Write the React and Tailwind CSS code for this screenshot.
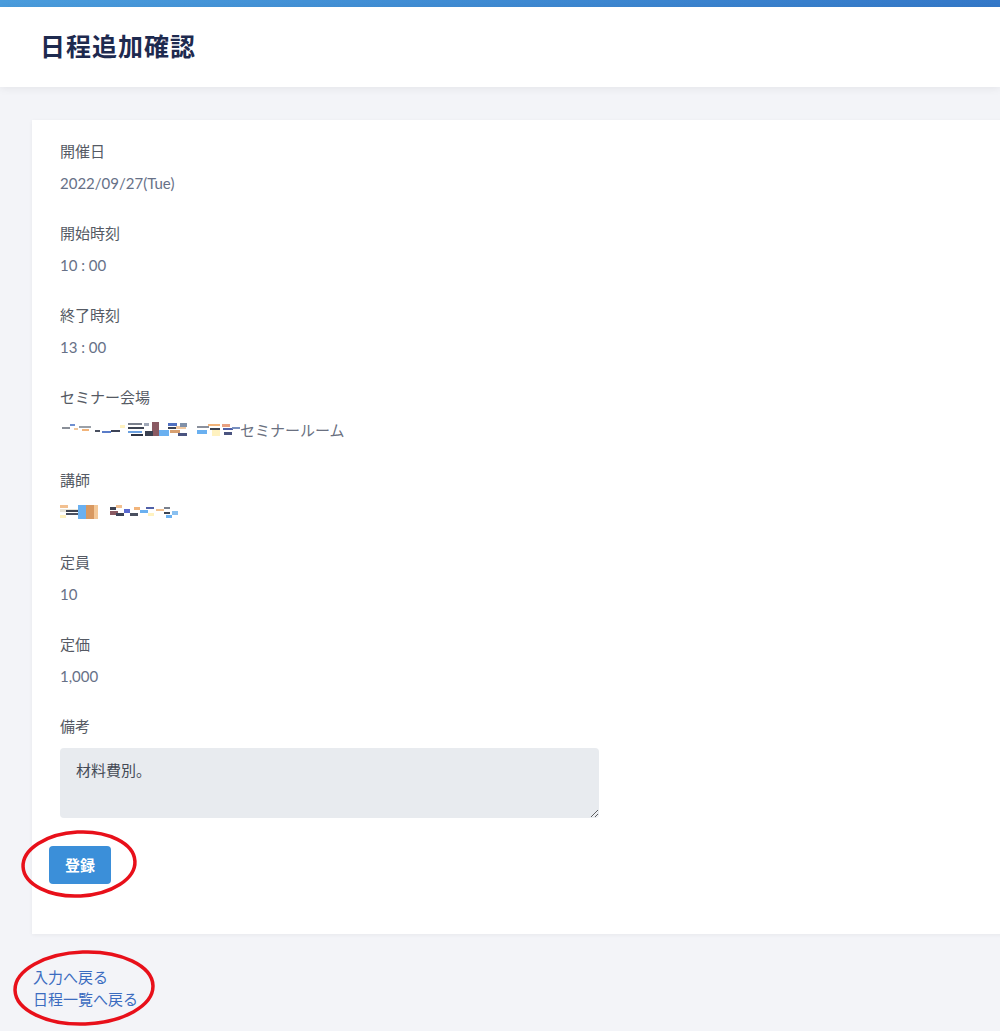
import React from "react";

const venueBlocks = [
  [2, 6, 8, 2, "#8a8f98"], [10, 3, 5, 2, "#6f8fd0"], [14, 7, 4, 2, "#f0c9a0"],
  [19, 5, 12, 2, "#9aa0a8"], [22, 8, 7, 2, "#f2b47a"], [35, 9, 5, 2, "#4a5060"],
  [42, 10, 9, 2, "#5a7cc8"], [51, 9, 9, 2, "#3c4256"], [60, 4, 5, 3, "#fff2c0"],
  [68, 2, 14, 2, "#7a808c"], [68, 6, 16, 2, "#3e4452"], [68, 10, 14, 2, "#6aa0e0"],
  [71, 13, 12, 2, "#2e3444"], [84, 2, 5, 3, "#a0a8b8"],
  [92, 1, 7, 14, "#8a5a62"], [85, 10, 8, 5, "#3a4050"], [99, 9, 10, 6, "#6ab0f0"],
  [108, 2, 9, 3, "#5070c0"], [108, 6, 12, 2, "#3c4252"], [110, 9, 10, 3, "#d8a070"],
  [116, 5, 10, 3, "#f0c8a0"], [120, 2, 7, 4, "#8090a8"], [118, 12, 9, 3, "#4a5480"],
  [137, 5, 12, 2, "#8a909c"], [137, 9, 10, 4, "#6ab0f0"], [148, 3, 12, 2, "#f2b47a"],
  [150, 7, 10, 2, "#3c4252"], [152, 9, 8, 6, "#fff2c0"], [162, 3, 8, 3, "#e8a080"],
  [163, 7, 10, 2, "#5060a8"], [164, 11, 8, 3, "#4a5480"], [172, 6, 8, 2, "#7890c0"],
];

const teacherBlocks = [
  [0, 2, 8, 3, "#f2c090"], [0, 6, 20, 3, "#e8e4d8"], [6, 7, 12, 2, "#3e4452"],
  [6, 10, 12, 2, "#4a5060"], [0, 12, 6, 3, "#fff2c0"], [18, 2, 8, 14, "#6ab0f0"],
  [26, 2, 8, 14, "#d89860"], [34, 2, 4, 14, "#f4c898"],
  [50, 4, 6, 3, "#3c4252"], [50, 8, 8, 4, "#8a5a62"], [56, 2, 6, 3, "#f2c090"],
  [56, 10, 8, 3, "#3c4256"], [64, 6, 6, 4, "#5a6ad0"], [70, 10, 8, 3, "#4a5060"],
  [74, 4, 6, 3, "#f2b47a"], [80, 7, 8, 3, "#6ab0f0"], [86, 4, 8, 2, "#5060a8"],
  [88, 10, 6, 3, "#fff2c0"], [96, 6, 8, 2, "#f0c090"], [104, 4, 6, 2, "#7a808c"],
  [104, 9, 6, 2, "#3e4452"], [106, 12, 6, 3, "#6ab0f0"], [112, 8, 6, 4, "#8ac0f0"],
];

function Mosaic({ blocks, width }) {
  return (
    <svg width={width} height="18" viewBox={`0 0 ${width} 18`} className="block">
      {blocks.map(([x, y, w, h, c], i) => (
        <rect key={i} x={x} y={y} width={w} height={h} fill={c} />
      ))}
    </svg>
  );
}

function Field({ label, children, last }) {
  return (
    <div className={last ? "" : "mb-[26px]"}>
      <div className="text-[15px] leading-6 text-[#555a64]">{label}</div>
      <div className="mt-2 min-h-6 text-[15px] leading-6 text-[#677187]">{children}</div>
    </div>
  );
}

export default function App() {
  return (
    <div
      className="relative min-h-[1031px] w-full overflow-hidden bg-[#f3f4f8]"
      style={{ fontFamily: '"Lato", "Noto Sans CJK JP", sans-serif' }}
    >
      <div className="h-[7px] bg-gradient-to-r from-[#4a9cdc] to-[#3478c8]" />
      <header className="flex h-[80px] items-center bg-white pl-10 shadow-[0_2px_8px_rgba(0,0,0,0.06)]">
        <h1 className="text-[25px] font-bold tracking-[1px] text-[#1e2a4f]">日程追加確認</h1>
      </header>

      <div className="ml-8 mt-[33px] w-[1000px] bg-white pb-[50px] pt-[19px] shadow-[0_1px_4px_rgba(0,0,0,0.05)]">
        <div className="pl-7">
          <Field label="開催日">2022/09/27(Tue)</Field>
          <Field label="開始時刻">10 : 00</Field>
          <Field label="終了時刻">13 : 00</Field>
          <Field label="セミナー会場">
            <div className="flex items-center pt-px">
              <Mosaic blocks={venueBlocks} width={180} />
              <span className="text-[15px] text-[#6a7080]">セミナールーム</span>
            </div>
          </Field>
          <Field label="講師">
            <div className="flex h-6 items-center">
              <Mosaic blocks={teacherBlocks} width={120} />
            </div>
          </Field>
          <Field label="定員">10</Field>
          <Field label="定価">1,000</Field>
          <div>
            <div className="text-[15px] leading-6 text-[#555a64]">備考</div>
            <textarea
              readOnly
              defaultValue="材料費別。"
              className="mt-[10px] block h-[70px] w-[539px] rounded-[4px] bg-[#e8ebef] px-4 pt-[10px] text-[15px] leading-6 text-[#444a55] outline-none"
            />
          </div>
        </div>
        <div className="ml-[17px] mt-[28px]">
          <button className="h-[38px] w-[62px] rounded-[4px] bg-[#3b8fd9] text-[15px] font-bold text-white">
            登録
          </button>
        </div>
      </div>

      <div className="ml-[33px] mt-[32px] flex flex-col text-[15px] leading-[22px] text-[#3b6cc0]">
        <a href="#" className="w-fit">入力へ戻る</a>
        <a href="#" className="w-fit">日程一覧へ戻る</a>
      </div>

      <svg className="pointer-events-none absolute left-0 top-0" width="1000" height="1031">
        <ellipse cx="79" cy="864" rx="56" ry="32" fill="none" stroke="#e8101a" strokeWidth="3.5" transform="rotate(-3 79 864)" />
        <ellipse cx="84" cy="988" rx="69" ry="36" fill="none" stroke="#e8101a" strokeWidth="3.5" transform="rotate(-2 84 988)" />
      </svg>
    </div>
  );
}
